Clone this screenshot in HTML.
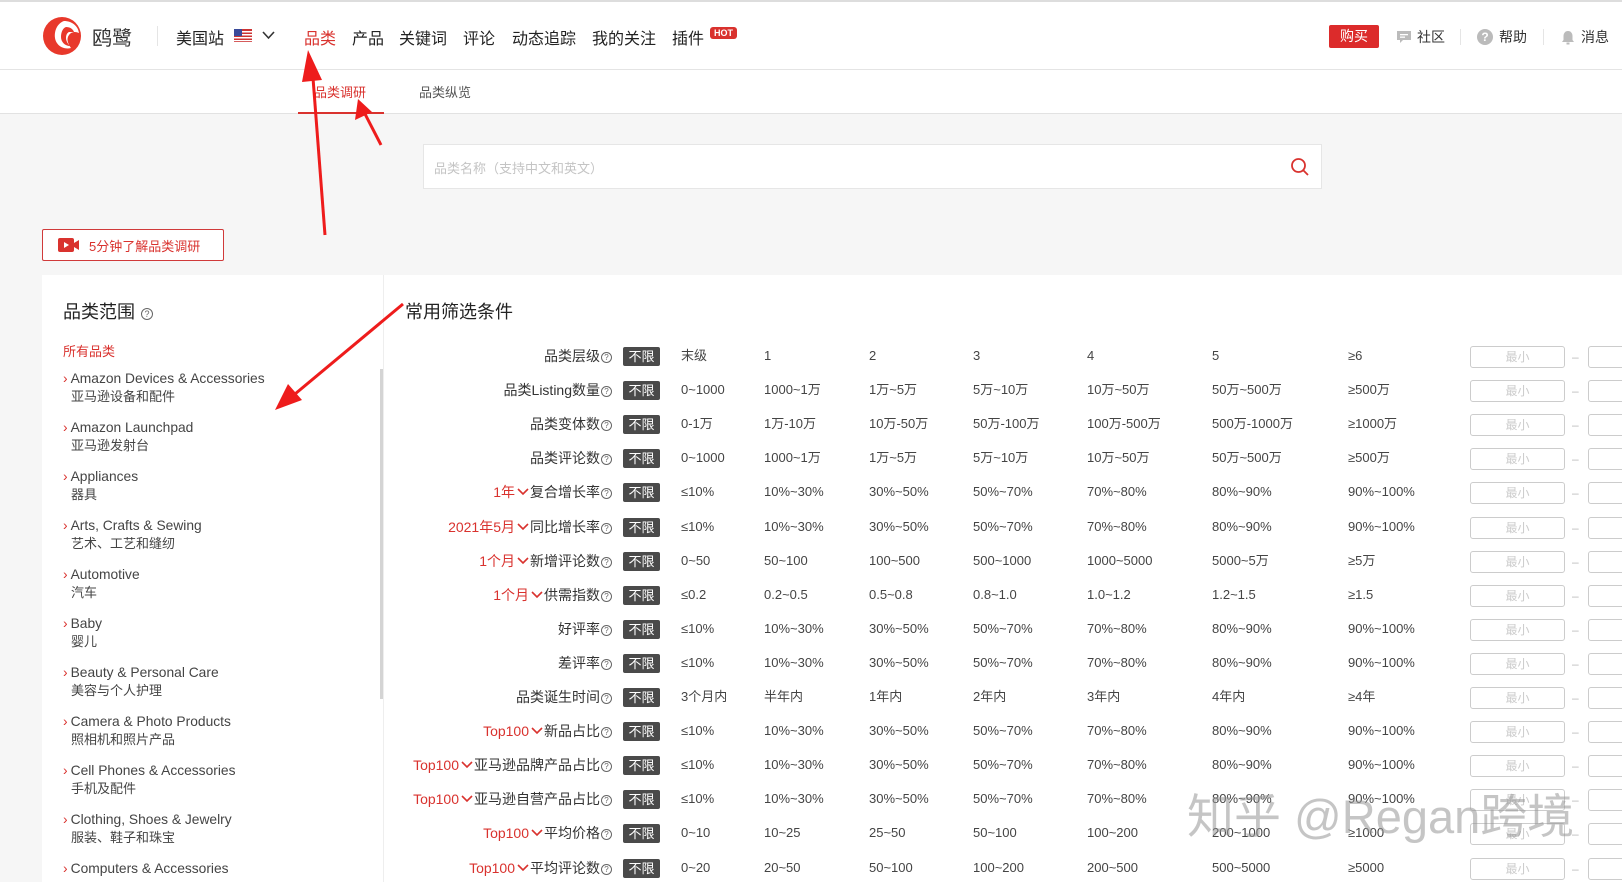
<!DOCTYPE html>
<html><head><meta charset="utf-8">
<style>
*{margin:0;padding:0;box-sizing:border-box}
body{width:1622px;height:882px;overflow:hidden;background:#f6f6f6;font-family:"Liberation Sans","Noto Sans CJK SC",sans-serif;color:#333;position:relative}
.a{position:absolute;white-space:nowrap}
.hdr{position:absolute;left:0;top:0;width:1622px;height:114px;background:#fff}
.nav{font-size:16px;color:#222;top:25px}
.sub{font-size:13px;color:#555;top:82px}
.row{font-size:13px;color:#444;line-height:18px;height:18px}
.lbl{position:absolute;right:1010px;text-align:right;font-size:14px;color:#333;white-space:nowrap;line-height:18px;height:18px}
.lbl i{font-style:normal;color:#d9322e}
.lbl svg{vertical-align:1px;margin:0 1px 0 2px}
.q{display:inline-block;width:11px;height:11px;border:1px solid #666;border-radius:50%;font-size:8px;line-height:9px;text-align:center;vertical-align:1px;margin-left:1px;color:#666}
.tag{position:absolute;left:623px;width:37px;height:19px;background:#4a4a4a;color:#fff;font-size:13px;text-align:center;line-height:19px;border-radius:2px}
.inp{position:absolute;left:1470px;width:95px;height:22px;border:1px solid #ccc;border-radius:3px;color:#ccc;font-size:12px;text-align:center;line-height:20px;background:#fff}
.inp2{position:absolute;left:1588px;width:40px;height:22px;border:1px solid #ccc;border-radius:3px;background:#fff}
.dash{position:absolute;left:1572px;color:#bbb;font-size:12px;line-height:22px}
.cat{position:absolute;left:63px;font-size:13.8px;color:#444;line-height:18px}
.cat b{color:#d9322e;font-weight:normal;margin-right:3px}
.cat span{display:block;padding-left:8px;font-size:13px}
</style></head><body>
<div class="hdr"></div>
<div class="a" style="left:0;top:0;width:1622px;height:2px;background:#ddd"></div>
<div class="a" style="left:0;top:69px;width:1622px;height:1px;background:#e4e4e4"></div>
<div class="a" style="left:0;top:113px;width:1622px;height:1px;background:#e2e2e2"></div>
<svg class="a" style="left:42px;top:15px" width="42" height="42" viewBox="0 0 42 42"><circle cx="20" cy="21" r="19" fill="#e8382b"/><path d="M22 6c8 0 14 5 15 12-4-2-8-1-10 2-3 4-1 9 2 13-8 2-15-3-16-10-1-8 3-15 9-17z" fill="#fff"/><path d="M24 12c4 0 7 2 8 5l-5 0c-2 1-3 3-3 6 0 3 2 6 4 8-5 0-9-4-9-9 0-5 2-9 5-10z" fill="#e8382b"/></svg>
<div class="a" style="left:92px;top:22px;font-size:20px;color:#333">鸥鹭</div>
<div class="a" style="left:157px;top:26px;width:1px;height:20px;background:#e5e5e5"></div>
<div class="a nav" style="left:176px">美国站</div>
<svg class="a" style="left:234px;top:29px" width="18" height="13" viewBox="0 0 18 13"><rect width="18" height="13" fill="#c33"/><rect y="2" width="18" height="1.5" fill="#fff"/><rect y="5" width="18" height="1.5" fill="#fff"/><rect y="8" width="18" height="1.5" fill="#fff"/><rect y="11" width="18" height="1.2" fill="#fff"/><rect width="8" height="7" fill="#3a4a9a"/></svg>
<svg class="a" style="left:262px;top:31px" width="13" height="9" viewBox="0 0 13 9"><path d="M1 1l5.5 6L12 1" stroke="#333" stroke-width="1.6" fill="none"/></svg>
<div class="a nav" style="left:304px;color:#d9322e">品类</div>
<div class="a nav" style="left:352px">产品</div>
<div class="a nav" style="left:399px">关键词</div>
<div class="a nav" style="left:463px">评论</div>
<div class="a nav" style="left:512px">动态追踪</div>
<div class="a nav" style="left:592px">我的关注</div>
<div class="a nav" style="left:672px">插件</div>
<div class="a" style="left:710px;top:27px;width:27px;height:12px;background:#d9322e;color:#fff;font-size:9px;font-weight:bold;line-height:12px;text-align:center;border-radius:3px">HOT</div>
<div class="a" style="left:1329px;top:25px;width:50px;height:23px;background:#dc2b2b;color:#fff;font-size:14px;line-height:23px;text-align:center;border-radius:2px">购买</div>
<svg class="a" style="left:1396px;top:30px" width="16" height="15" viewBox="0 0 16 15"><path d="M1 1h14v9H7l-3 3v-3H1z" fill="#bbb"/><rect x="4" y="4" width="8" height="1.3" fill="#fff"/><rect x="4" y="6.5" width="5" height="1.3" fill="#fff"/></svg>
<div class="a" style="left:1417px;top:27px;font-size:14px;color:#333">社区</div>
<div class="a" style="left:1460px;top:29px;width:1px;height:16px;background:#e5e5e5"></div>
<div class="a" style="left:1477px;top:29px;width:16px;height:16px;border-radius:50%;background:#bbb;color:#fff;font-size:12px;font-weight:bold;text-align:center;line-height:16px">?</div>
<div class="a" style="left:1499px;top:27px;font-size:14px;color:#333">帮助</div>
<div class="a" style="left:1543px;top:29px;width:1px;height:16px;background:#e5e5e5"></div>
<svg class="a" style="left:1561px;top:30px" width="14" height="15" viewBox="0 0 14 15"><path d="M7 1c3 0 4.5 2.5 4.5 5v4l1.5 2H1l1.5-2V6C2.5 3.5 4 1 7 1z" fill="#bbb"/><rect x="5.5" y="12.5" width="3" height="2" fill="#bbb"/></svg>
<div class="a" style="left:1581px;top:27px;font-size:14px;color:#333">消息</div>
<div class="a sub" style="left:314px;color:#d9322e">品类调研</div>
<div class="a sub" style="left:419px">品类纵览</div>
<div class="a" style="left:298px;top:112px;width:86px;height:2px;background:#d9322e"></div>
<div class="a" style="left:423px;top:144px;width:899px;height:45px;background:#fff;border:1px solid #e6e6e6"></div>
<div class="a" style="left:434px;top:158px;font-size:13px;color:#c4c4c4">品类名称（支持中文和英文）</div>
<svg class="a" style="left:1290px;top:157px" width="20" height="20" viewBox="0 0 20 20"><circle cx="8.5" cy="8.5" r="6.5" stroke="#d9322e" stroke-width="1.8" fill="none"/><path d="M13.5 13.5L18 18" stroke="#d9322e" stroke-width="1.8"/></svg>
<div class="a" style="left:42px;top:229px;width:182px;height:32px;border:1px solid #d03a3a;border-radius:2px;background:#fff"></div>
<svg class="a" style="left:58px;top:238px" width="22" height="14" viewBox="0 0 22 14"><rect x="0" y="0" width="16" height="14" rx="2" fill="#d9322e"/><path d="M6 4l5 3-5 3z" fill="#fff"/><path d="M16 5l5-3v10l-5-3z" fill="#d9322e"/></svg>
<div class="a" style="left:89px;top:236px;font-size:13px;color:#d9322e">5分钟了解品类调研</div>
<div class="a" style="left:42px;top:275px;width:1580px;height:607px;background:#fff"></div>
<div class="a" style="left:383px;top:275px;width:1px;height:607px;background:#eee"></div>
<div class="a" style="left:380px;top:369px;width:3px;height:330px;background:#d4d4d4"></div>
<div class="a" style="left:63px;top:298px;font-size:18px;color:#222">品类范围 <span class="q" style="width:12px;height:12px;font-size:9px;line-height:10px">?</span></div>
<div class="a" style="left:63px;top:341px;font-size:13px;color:#d9322e">所有品类</div>
<div class="cat" style="top:370px"><b>›</b>Amazon Devices &amp; Accessories<span>亚马逊设备和配件</span></div>
<div class="cat" style="top:419px"><b>›</b>Amazon Launchpad<span>亚马逊发射台</span></div>
<div class="cat" style="top:468px"><b>›</b>Appliances<span>器具</span></div>
<div class="cat" style="top:517px"><b>›</b>Arts, Crafts &amp; Sewing<span>艺术、工艺和缝纫</span></div>
<div class="cat" style="top:566px"><b>›</b>Automotive<span>汽车</span></div>
<div class="cat" style="top:615px"><b>›</b>Baby<span>婴儿</span></div>
<div class="cat" style="top:664px"><b>›</b>Beauty &amp; Personal Care<span>美容与个人护理</span></div>
<div class="cat" style="top:713px"><b>›</b>Camera &amp; Photo Products<span>照相机和照片产品</span></div>
<div class="cat" style="top:762px"><b>›</b>Cell Phones &amp; Accessories<span>手机及配件</span></div>
<div class="cat" style="top:811px"><b>›</b>Clothing, Shoes &amp; Jewelry<span>服装、鞋子和珠宝</span></div>
<div class="cat" style="top:860px"><b>›</b>Computers &amp; Accessories</div>
<div class="a" style="left:405px;top:298px;font-size:18px;color:#222">常用筛选条件</div>
<div id="rows"></div>
<script>
var V='<svg width="12" height="8" viewBox="0 0 12 8"><path d="M1 1l5 5 5-5" stroke="#d9322e" stroke-width="1.6" fill="none"/></svg>';
var P=["≤10%","10%~30%","30%~50%","50%~70%","70%~80%","80%~90%","90%~100%"];
var R=[["品类层级",["末级","1","2","3","4","5","≥6"]],
["品类Listing数量",["0~1000","1000~1万","1万~5万","5万~10万","10万~50万","50万~500万","≥500万"]],
["品类变体数",["0-1万","1万-10万","10万-50万","50万-100万","100万-500万","500万-1000万","≥1000万"]],
["品类评论数",["0~1000","1000~1万","1万~5万","5万~10万","10万~50万","50万~500万","≥500万"]],
["<i>1年</i>"+V+"复合增长率",P],["<i>2021年5月</i>"+V+"同比增长率",P],
["<i>1个月</i>"+V+"新增评论数",["0~50","50~100","100~500","500~1000","1000~5000","5000~5万","≥5万"]],
["<i>1个月</i>"+V+"供需指数",["≤0.2","0.2~0.5","0.5~0.8","0.8~1.0","1.0~1.2","1.2~1.5","≥1.5"]],
["好评率",P],["差评率",P],
["品类诞生时间",["3个月内","半年内","1年内","2年内","3年内","4年内","≥4年"]],
["<i>Top100</i>"+V+"新品占比",P],["<i>Top100</i>"+V+"亚马逊品牌产品占比",P],["<i>Top100</i>"+V+"亚马逊自营产品占比",P],
["<i>Top100</i>"+V+"平均价格",["0~10","10~25","25~50","50~100","100~200","200~1000","≥1000"]],
["<i>Top100</i>"+V+"平均评论数",["0~20","20~50","50~100","100~200","200~500","500~5000","≥5000"]]];
var X=[681,764,869,973,1087,1212,1348],h="";
R.forEach(function(r,i){var y=347+i*34.1;
h+='<div class="lbl" style="top:'+y+'px">'+r[0]+'<span class="q">?</span></div>';
h+='<div class="tag" style="top:'+y+'px">不限</div>';
r[1].forEach(function(t,j){h+='<div class="a row" style="left:'+X[j]+'px;top:'+y+'px">'+t+'</div>'});
h+='<div class="inp" style="top:'+(y-1)+'px">最小</div><div class="dash" style="top:'+(y-1)+'px">–</div><div class="inp2" style="top:'+(y-1)+'px"></div>';});
document.getElementById("rows").innerHTML=h;
</script>
<div class="a" style="left:1187px;top:778px;font-size:47px;color:rgba(150,150,150,.55)">知乎 @Regan跨境</div>
<svg class="a" style="left:0;top:0" width="1622" height="882">
<path d="M325 235L313 78" stroke="#ee1c1c" stroke-width="3"/><path d="M308 50L302 82L322 80z" fill="#ee1c1c"/>
<path d="M381 145L364 112" stroke="#ee1c1c" stroke-width="3"/><path d="M358 99L355 120L372 112z" fill="#ee1c1c"/>
<path d="M403 304L295 394" stroke="#ee1c1c" stroke-width="3"/><path d="M275 410L288 384L302 400z" fill="#ee1c1c"/>
</svg>
</body></html>
